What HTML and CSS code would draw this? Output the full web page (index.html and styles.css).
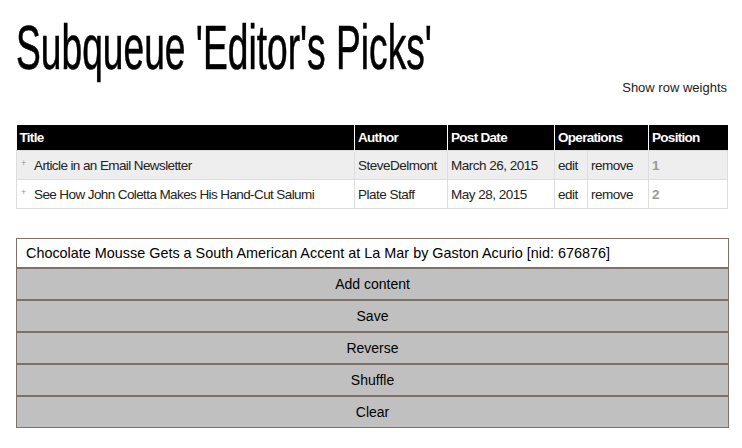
FILE: index.html
```html
<!DOCTYPE html>
<html><head><meta charset="UTF-8">
<title>Subqueue 'Editor's Picks'</title>
<link rel="stylesheet" href="styles.css">
</head>
<body>
<div id="page">
<h1 class="pageTitle"><span>Subqueue 'Editor's Picks'</span></h1>
<div class="weights"><a href="#">Show row weights</a></div>

<table class="queue">
  <colgroup>
    <col class="colTitle"><col class="colAuthor"><col class="colDate">
    <col class="colEdit"><col class="colRemove"><col class="colPos">
  </colgroup>
  <thead>
    <tr><th>Title</th><th>Author</th><th>Post Date</th><th colspan="2">Operations</th><th>Position</th></tr>
  </thead>
  <tbody>
    <tr class="odd">
      <td class="titleCell"><span class="handle">+</span>Article in an Email Newsletter</td>
      <td>SteveDelmont</td><td>March 26, 2015</td><td>edit</td><td>remove</td><td class="pos">1</td>
    </tr>
    <tr class="even">
      <td class="titleCell"><span class="handle">+</span>See How John Coletta Makes His Hand-Cut Salumi</td>
      <td>Plate Staff</td><td>May 28, 2015</td><td>edit</td><td>remove</td><td class="pos">2</td>
    </tr>
  </tbody>
</table>

<form class="addForm">
  <input type="text" class="nodeInput" value="Chocolate Mousse Gets a South American Accent at La Mar by Gaston Acurio [nid: 676876]">
  <button type="button" class="formButton">Add content</button>
  <button type="button" class="formButton">Save</button>
  <button type="button" class="formButton">Reverse</button>
  <button type="button" class="formButton">Shuffle</button>
  <button type="button" class="formButton">Clear</button>
</form>
</div>
</body></html>
```

FILE: styles.css
```css
body {
  margin: 0;
  background-color: #fff;
  font-family: "Liberation Sans", Arial, sans-serif;
  color: #222;
}
#page {
  padding: 0 15px 0 16px;
}
.pageTitle {
  margin: 15px 0 0 0;
  font-family: "Liberation Sans", sans-serif;
  font-weight: normal;
  font-size: 63px;
  line-height: 64px;
  color: #000;
  white-space: nowrap;
  -webkit-text-stroke: 0.6px #000;
}
.pageTitle span {
  display: inline-block;
  transform: scaleX(0.59);
  transform-origin: left center;
}
.weights {
  text-align: right;
  font-size: 13px;
  line-height: 16px;
  margin-top: 1px;
}
.weights a {
  color: #222;
  text-decoration: none;
}
.queue {
  margin-top: 29px;
  width: 711px;
  border-collapse: collapse;
  table-layout: fixed;
  font-size: 13.5px;
  letter-spacing: -0.5px;
}
.colTitle { width: 338px; }
.colAuthor { width: 93px; }
.colDate { width: 107px; }
.colEdit { width: 33px; }
.colRemove { width: 61px; }
.colPos { width: 79px; }
.queue th {
  background-color: #000;
  color: #fff;
  text-align: left;
  font-weight: bold;
  letter-spacing: -0.7px;
  height: 25px;
  padding: 0 3px;
  border-right: 1px solid #fff;
}
.queue th:last-child {
  border-right: none;
}
.queue td {
  height: 28px;
  padding: 0 3px;
  border: 1px solid #ddd;
  color: #222;
  white-space: nowrap;
}
.queue td.titleCell {
  letter-spacing: -0.6px;
}
.queue tr.odd td {
  background-color: #eee;
}
.queue td.pos {
  color: #999;
  font-weight: bold;
}
.handle {
  display: inline-block;
  width: 13px;
  font-size: 9px;
  color: #999;
  vertical-align: 4px;
  padding-left: 1px;
}
.addForm {
  margin-top: 29px;
  width: 711px;
  border: 1px solid #7d716a;
}
.nodeInput {
  display: block;
  box-sizing: border-box;
  width: 100%;
  height: 30px;
  margin: 0;
  padding: 0 9px;
  border: none;
  border-bottom: 2px solid #7d716a;
  font-family: "Liberation Sans", Arial, sans-serif;
  font-size: 14.4px;
  color: #000;
  background-color: #fff;
}
.formButton {
  display: block;
  width: 100%;
  height: 32px;
  margin: 0;
  border: none;
  border-bottom: 2px solid #7d716a;
  background-color: #c0c0c0;
  font-family: "Liberation Sans", Arial, sans-serif;
  font-size: 14px;
  color: #000;
}
.formButton:last-child {
  border-bottom: none;
  height: 30px;
}
```
